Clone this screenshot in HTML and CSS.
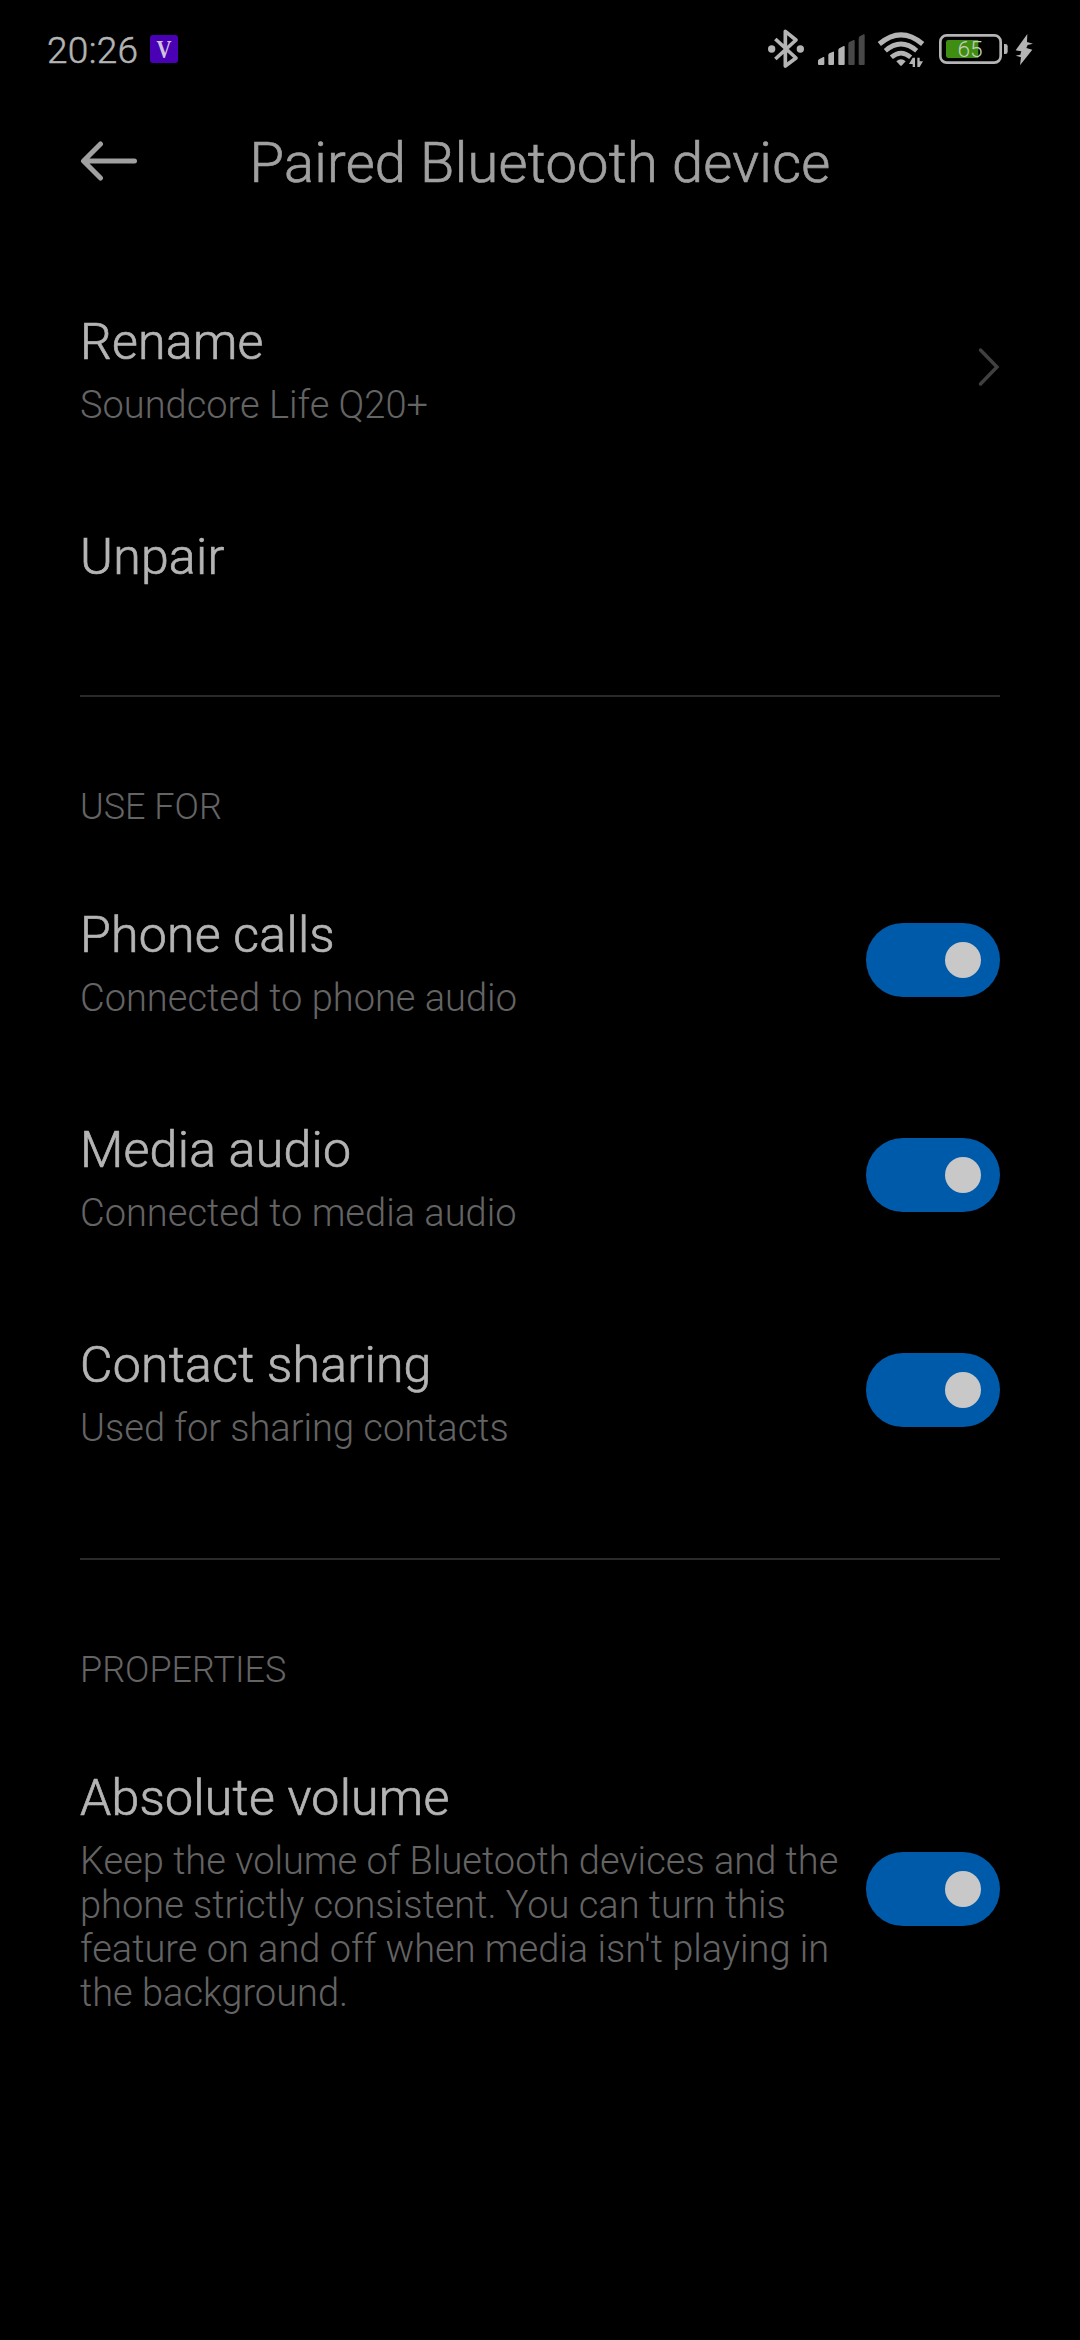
FILE: index.html
```html
<!DOCTYPE html>
<html lang="en">
<head>
    <meta charset="UTF-8">
    <meta name="viewport" content="width=device-width, initial-scale=1.0">
    <title>Paired Bluetooth device</title>
    <link rel="stylesheet" href="styles.css">
</head>
<body>
    <div class="status-bar">
        <span class="clock">20:26</span>
        <svg class="app-badge" width="28" height="28" viewBox="0 0 28 28">
            <text x="6.5" y="22.5" textLength="15" lengthAdjust="spacingAndGlyphs">V</text>
        </svg>
        <div class="status-icons">
            <!-- bluetooth -->
            <svg width="45" height="70" viewBox="45 0 135 210">
                <path class="line" stroke-width="11" d="M76 72 L138 129 L106 153 V49 L138 75 L76 132"/>
                <circle class="solid" cx="65" cy="102" r="11"/>
                <circle class="solid" cx="151" cy="102" r="11"/>
            </svg>
            <!-- signal -->
            <svg width="60" height="70" viewBox="180 0 180 210">
                <path class="solid" d="M204 138 Q204 135 207 133 L220 126 Q223 125 223 128 V147 Q223 150 220 150 H207 Q204 150 204 147 Z"/>
                <path class="solid" d="M235 121 Q235 117 238 115 L249 110 Q252 109 252 112 V147 Q252 150 249 150 H238 Q235 150 235 147 Z"/>
                <path class="solid" d="M265 106 Q265 102 268 100 L281 93 Q284 92 284 95 V147 Q284 150 281 150 H268 Q265 150 265 147 Z"/>
                <path class="faded" d="M295 87 Q295 83 298 81 L311 75 Q314 74 314 77 V147 Q314 150 311 150 H298 Q295 150 295 147 Z"/>
                <path class="faded" d="M326 71 Q326 66 329 64 L341 58 Q344 57 344 60 V147 Q344 150 341 150 H329 Q326 150 326 147 Z"/>
            </svg>
            <!-- wifi -->
            <svg width="60" height="70" viewBox="360 0 180 210">
                <path class="line" stroke-width="15" stroke-linecap="butt" d="M388 87 Q453 32 518 87"/>
                <path class="line" stroke-width="14" stroke-linecap="butt" d="M406 107 Q453 67 500 107"/>
                <path class="line" stroke-width="14" stroke-linecap="butt" d="M424 127 Q453 102 482 127"/>
                <path class="solid" d="M439 139 Q453 126 467 139 L456 151 Q453 154 450 151 Z"/>
                <path class="solid" d="M488 128 H495 V156 H488 V147 H477 Z M502 156 V128 H509 V139 H519 L509 156 Z"/>
            </svg>
            <!-- battery -->
            <svg width="80" height="70" viewBox="540 0 240 210">
                <rect class="line" x="571" y="61" width="181" height="82" rx="19" stroke-width="8"/>
                <path fill="#3f8e12" d="M595 75 H685 V129 H595 Q588 129 588 122 V82 Q588 75 595 75 Z"/>
                <path class="solid" d="M762 87 H766 Q773 87 773 94 V110 Q773 117 766 117 H762 Z"/>
                <text class="percent" x="660" y="126" text-anchor="middle">65</text>
            </svg>
            <!-- charging -->
            <svg width="40" height="70" viewBox="780 0 120 210">
                <path class="solid" d="M832 57 L797 106 L814 109 L811 119 L797 122 L813 127 L810 151 L847 104 L829 99 L833 90 L849 86 L831 81 Z"/>
            </svg>
        </div>
    </div>

    <div class="header">
        <svg class="back" width="60" height="42" viewBox="0 0 60 42">
            <path d="M20.5 4 L3.5 21 L20.5 38 M4 21 H54.5"/>
        </svg>
        <h1>Paired Bluetooth device</h1>
    </div>

    <div class="row">
        <div class="text">
            <div class="name">Rename</div>
            <div class="info">Soundcore Life Q20+</div>
        </div>
        <svg class="chevron" width="22" height="40" viewBox="0 0 22 40">
            <path d="M2.5 3 L19 20 L2.5 37"/>
        </svg>
    </div>
    <div class="row">
        <div class="text">
            <div class="name">Unpair</div>
        </div>
    </div>

    <hr>

    <h2>USE FOR</h2>
    <div class="row">
        <div class="text">
            <div class="name">Phone calls</div>
            <div class="info">Connected to phone audio</div>
        </div>
        <div class="switch"></div>
    </div>
    <div class="row">
        <div class="text">
            <div class="name">Media audio</div>
            <div class="info">Connected to media audio</div>
        </div>
        <div class="switch"></div>
    </div>
    <div class="row">
        <div class="text">
            <div class="name">Contact sharing</div>
            <div class="info">Used for sharing contacts</div>
        </div>
        <div class="switch"></div>
    </div>

    <hr>

    <h2>PROPERTIES</h2>
    <div class="row">
        <div class="text">
            <div class="name">Absolute volume</div>
            <div class="info">Keep the volume of Bluetooth devices and the phone strictly consistent. You can turn this feature on and off when media isn't playing in the background.</div>
        </div>
        <div class="switch"></div>
    </div>
</body>
</html>
```
FILE: styles.css
```css
* 
{
    box-sizing: border-box;
}
body 
{
    margin: 0;
    min-height: 2340px;
    background-color: #000;
    color: #b4b4b4;
    font-family: Roboto, sans-serif;
    font-weight: 300;
}
.status-bar 
{
    display: flex;
    align-items: center;
    height: 100px;
    padding: 0 30px 0 47px;
}
.clock 
{
    width: 103px;
    padding-top: 2px;
    font-size: 37px;
    letter-spacing: 0.3px;
    line-height: 44px;
    -webkit-text-stroke: 0.5px;
}
.app-badge 
{
    margin-bottom: 2px;
    border-radius: 3px;
    background-color: #4a00b4;
}
.app-badge text 
{
    fill: #d0c4dc;
    font-family: "Liberation Serif", serif;
    font-size: 25px;
    font-weight: bold;
}
.status-icons 
{
    display: flex;
    margin-left: auto;
}
.solid 
{
    fill: #b4b4b4;
}
.faded 
{
    fill: #484848;
}
.line 
{
    fill: none;
    stroke: #b4b4b4;
    stroke-linejoin: round;
}
.percent 
{
    fill: #c4cfc0;
    font-size: 68px;
}
.header 
{
    display: grid;
    grid-template-columns: 160px 1fr 160px;
    align-items: center;
    height: 160px;
    padding: 0 80px;
    padding-bottom: 34px;
}
.back 
{
    margin-bottom: 4px;
}
.back path 
{
    fill: none;
    stroke: #a0a0a0;
    stroke-width: 5;
    stroke-linecap: round;
    stroke-linejoin: round;
}
h1 
{
    margin: 0;
    color: #a0a0a0;
    font-size: 56px;
    font-weight: 300;
    letter-spacing: 0.25px;
    line-height: 66px;
    text-align: center;
    white-space: nowrap;
    -webkit-text-stroke: 0.7px;
}
.row 
{
    display: flex;
    align-items: center;
    justify-content: space-between;
    padding: 0 80px;
}
.text 
{
    width: 769px;
    padding: 53px 0 48px;
}
.name 
{
    font-size: 50px;
    letter-spacing: 0.25px;
    line-height: 59px;
    -webkit-text-stroke: 0.7px;
}
.info 
{
    margin-top: 11px;
    color: #646464;
    font-size: 38px;
    line-height: 44px;
}
.chevron 
{
    margin-bottom: 1px;
}
.chevron path 
{
    fill: none;
    stroke: #404040;
    stroke-width: 3.5;
    stroke-linecap: round;
}
.switch 
{
    display: flex;
    align-items: center;
    justify-content: flex-end;
    width: 134px;
    height: 74px;
    margin-bottom: 1px;
    padding-right: 19px;
    border-radius: 37px;
    background-color: #005aaa;
}
.switch::after 
{
    content: "";
    width: 36px;
    height: 36px;
    border-radius: 50%;
    background-color: #c8c8c8;
}
hr 
{
    height: 2px;
    margin: 60px 80px 89px;
    border: none;
    background-color: #2a2a2a;
}
h2 
{
    margin: 0 80px 25px;
    color: #646464;
    font-size: 36px;
    font-weight: 300;
    line-height: 42px;
}
```
